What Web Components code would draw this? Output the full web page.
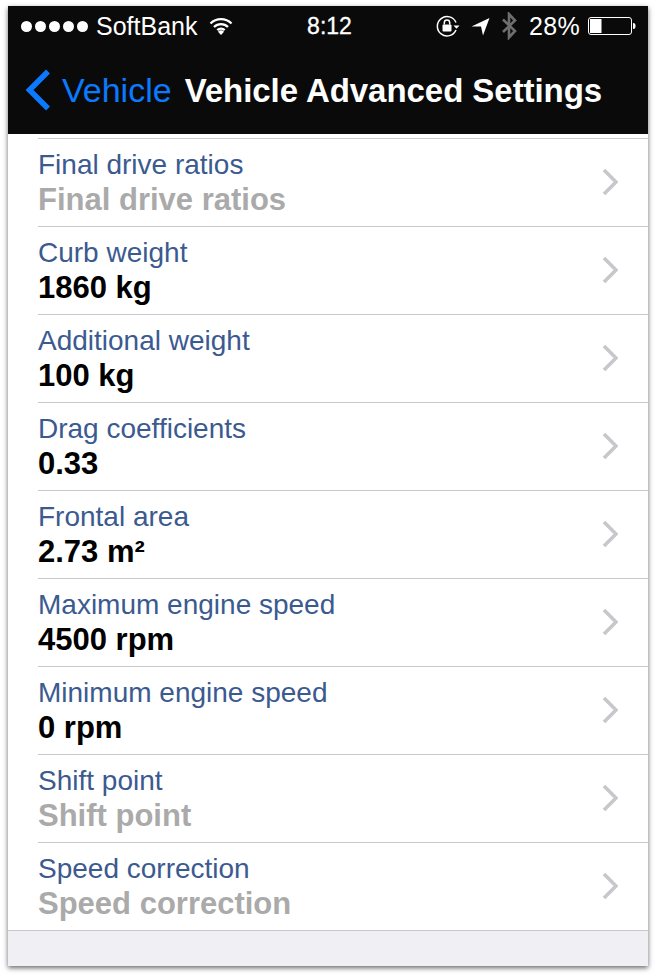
<!DOCTYPE html>
<html>
<head>
<meta charset="utf-8">
<title>Vehicle Advanced Settings</title>
<style>
  html, body { margin: 0; background: #fff; }
  body { font-family: "Liberation Sans", Arial, sans-serif; height: 976px; overflow: hidden; }
</style>
</head>
<body>
<phone-frame>
  <status-bar slot="top"></status-bar>
  <nav-bar slot="top" back="Vehicle" title="Vehicle Advanced Settings"></nav-bar>
  <setting-row label="Final drive ratios" value="Final drive ratios" empty></setting-row>
  <setting-row label="Curb weight" value="1860 kg"></setting-row>
  <setting-row label="Additional weight" value="100 kg"></setting-row>
  <setting-row label="Drag coefficients" value="0.33"></setting-row>
  <setting-row label="Frontal area" value="2.73 m²"></setting-row>
  <setting-row label="Maximum engine speed" value="4500 rpm"></setting-row>
  <setting-row label="Minimum engine speed" value="0 rpm"></setting-row>
  <setting-row label="Shift point" value="Shift point" empty></setting-row>
  <setting-row label="Speed correction" value="Speed correction" empty></setting-row>
</phone-frame>

<script>
class PhoneFrame extends HTMLElement {
  constructor() {
    super();
    this.attachShadow({ mode: 'open' });
    this.shadowRoot.innerHTML = `
      <style>
        :host { width: 640px; height: 960px; margin: 6px 8px 0; background: #fff;
                box-shadow: 0 2px 5px rgba(0,0,0,.6); display: flex; flex-direction: column; }
        .list { flex: 1; padding-top: 4px; border-bottom: 1px solid #c8c7cc; display: flex; flex-direction: column; }
        .foot { height: 35px; background: #efeff4; }
      </style>
      <slot name="top"></slot>
      <div class="list"><slot></slot></div>
      <div class="foot"></div>
    `;
  }
}

class StatusBar extends HTMLElement {
  constructor() {
    super();
    this.attachShadow({ mode: 'open' });
    this.shadowRoot.innerHTML = `
      <style>
        :host { display: grid; grid-template-columns: 1fr auto 1fr; align-items: center; height: 40px; padding: 0 12px 0 13px;
                background: #0a0a0a; color: #fff; font-size: 25px; }
        .left, .right { display: flex; align-items: center; }
        .right { justify-content: flex-end; }
        .dots { display: flex; gap: 3px; margin-right: 8px; }
        .dots i { width: 11px; height: 11px; border-radius: 50%; background: #fff; }
        .carrier { margin-top: 1px; }
        .wifi { margin-left: 12px; }
        .pct { margin: 1px 8px 0 12px; letter-spacing: .3px; }
        .time { font-size: 23px; -webkit-text-stroke: .3px #fff; margin: 1px 0 0 2px; }
        svg { display: block; }
      </style>
      <div class="left">
        <div class="dots"><i></i><i></i><i></i><i></i><i></i></div>
        <span class="carrier">SoftBank</span>
        <svg class="wifi" width="24" height="18" viewBox="0 0 24 18">
          <path d="M1.500 6.500a15 15 0 0 1 21 0M5 10a10 10 0 0 1 14 0M8.300 13.200a5.400 5.400 0 0 1 7.400 0" fill="none" stroke="#fff" stroke-width="2.300"/>
          <path d="M12 18l-3-3.200a4.300 4.300 0 0 1 6 0z" fill="#fff"/>
        </svg>
      </div>
      <span class="time">8:12</span>
      <div class="right">
        <svg width="24" height="22" viewBox="0 0 24 22">
          <path d="M20 7.500A9.700 9.700 0 1 0 20 15" fill="none" stroke="#fff" stroke-width="1.500"/>
          <path d="M17.500 10.500h6l-3 3.200z" fill="#fff"/>
          <rect x="6.500" y="9.500" width="9" height="7" rx="1" fill="#fff"/>
          <path d="M8.300 9.500V7.800a2.700 2.700 0 0 1 5.400 0v1.700" fill="none" stroke="#fff" stroke-width="1.500"/>
        </svg>
        <svg style="margin-left:11px" width="19" height="19" viewBox="0 0 19 19">
          <path d="M0.500 9.500L18.500 1 12 18.500 10 9.500z" fill="#fff"/>
        </svg>
        <svg style="margin-left:11px" width="16" height="28" viewBox="0 0 16 28">
          <path d="M2 7.500L14 19 8 25.500V2l6 6.500L2 20" fill="none" stroke="#6e6e6e" stroke-width="2.600"/>
        </svg>
        <span class="pct">28%</span>
        <svg width="48" height="20" viewBox="0 0 48 20">
          <rect x="0.500" y="1.500" width="43" height="17" rx="2.500" fill="none" stroke="#fff" stroke-width="1"/>
          <rect x="2" y="3" width="11.500" height="14" fill="#fff"/>
          <path d="M45 7c2 0 2.500 1 2.500 3s-.5 3-2.500 3z" fill="#fff"/>
        </svg>
      </div>
    `;
  }
}

class NavBar extends HTMLElement {
  constructor() {
    super();
    this.attachShadow({ mode: 'open' });
    const back = this.getAttribute('back') || '';
    const title = this.getAttribute('title') || '';
    this.shadowRoot.innerHTML = `
      <style>
        :host { display: flex; align-items: center; height: 88px; padding: 0 0 0 17px; background: #0a0a0a; color: #fff; font-size: 34px; }
        svg { display: block; margin-right: 11px; }
        .back { color: #0a7aff; margin-right: 13px; }
        .title { font-size: 33px; font-weight: 700; margin-top: 2px; letter-spacing: -.05px; }
      </style>
      <svg width="26" height="42" viewBox="0 0 26 42">
        <path d="M23 2.500L4.500 21 23 39.500" fill="none" stroke="#0a7aff" stroke-width="5.500"/>
      </svg>
      <span class="back">${back}</span>
      <span class="title">${title}</span>
    `;
  }
}

class SettingRow extends HTMLElement {
  constructor() {
    super();
    this.attachShadow({ mode: 'open' });
    const label = this.getAttribute('label') || '';
    const value = this.getAttribute('value') || '';
    this.shadowRoot.innerHTML = `
      <style>
        :host { display: flex; align-items: center; justify-content: space-between; box-sizing: border-box; height: 88px;
                margin-left: 30px; padding: 0 30px 0 0; border-top: 1px solid #c8c7cc; }
        :host([empty]) .value { color: #aaa; }
        .text { padding-top: 2px; }
        .label { color: #3b5a90; font-size: 28px; line-height: 32px; }
        .value { color: #000; font-size: 31px; font-weight: 700; line-height: 38px; }
        svg { display: block; margin-top: -2px; }
      </style>
      <div class="text">
        <div class="label">${label}</div>
        <div class="value">${value}</div>
      </div>
      <svg width="16" height="28" viewBox="0 0 16 28">
        <path d="M2 2l12 12L2 26" fill="none" stroke="#c7c7cc" stroke-width="3.600"/>
      </svg>
    `;
  }
}

customElements.define('phone-frame', PhoneFrame);
customElements.define('status-bar', StatusBar);
customElements.define('nav-bar', NavBar);
customElements.define('setting-row', SettingRow);
</script>
</body>
</html>
